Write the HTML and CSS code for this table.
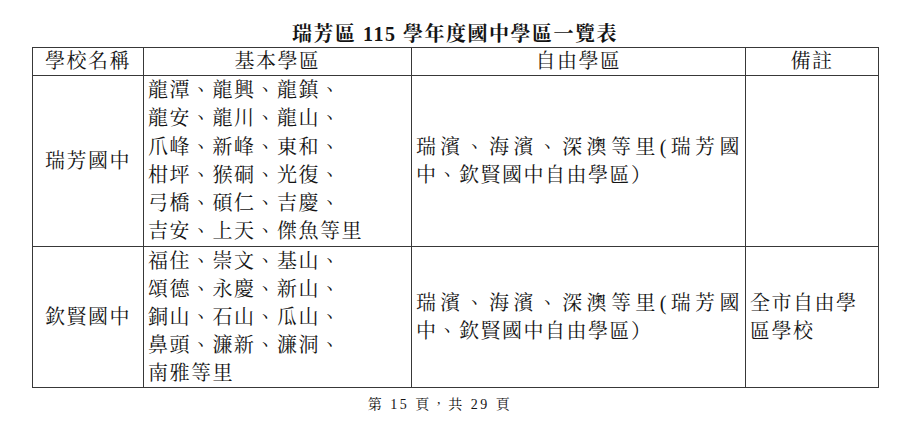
FILE: index.html
```html
<!DOCTYPE html>
<html lang="zh-Hant">
<head>
<meta charset="utf-8">
<title>瑞芳區115學年度國中學區一覽表</title>
<link rel="stylesheet" href="styles.css">
</head>
<body>
<div class="page">
  <h1 class="title">瑞芳區 115 學年度國中學區一覽表</h1>
  <table class="districts">
    <colgroup>
      <col class="c-school">
      <col class="c-basic">
      <col class="c-free">
      <col class="c-note">
    </colgroup>
    <thead>
      <tr>
        <th>學校名稱</th>
        <th>基本學區</th>
        <th>自由學區</th>
        <th>備註</th>
      </tr>
    </thead>
    <tbody>
      <tr class="row-a">
        <td class="school">瑞芳國中</td>
        <td class="basic">龍潭、龍興、龍鎮、<br>龍安、龍川、龍山、<br>爪峰、新峰、東和、<br>柑坪、猴硐、光復、<br>弓橋、碩仁、吉慶、<br>吉安、上天、傑魚等里</td>
        <td class="free"><span class="jl">瑞濱、海濱、深澳等里(瑞芳國</span>中、欽賢國中自由學區）</td>
        <td class="note"></td>
      </tr>
      <tr class="row-b">
        <td class="school">欽賢國中</td>
        <td class="basic">福住、崇文、基山、<br>頌德、永慶、新山、<br>銅山、石山、瓜山、<br>鼻頭、濂新、濂洞、<br>南雅等里</td>
        <td class="free"><span class="jl">瑞濱、海濱、深澳等里(瑞芳國</span>中、欽賢國中自由學區）</td>
        <td class="note">全市自由學<br>區學校</td>
      </tr>
    </tbody>
  </table>
  <div class="footer">第 15 頁，共 29 頁</div>
</div>
</body>
</html>
```

FILE: styles.css
```css
html, body {
  margin: 0;
  padding: 0;
  background: #ffffff;
}

body {
  font-family: "Liberation Serif", "Noto Serif CJK TC", "Noto Sans CJK TC", serif;
  color: #141414;
}

.page {
  width: 846px;
  margin-left: 32px;
}

.title {
  margin: 0;
  padding-top: 22px;
  height: 25px;
  line-height: 25px;
  font-size: 20px;
  font-weight: bold;
  text-align: center;
  letter-spacing: 1.5px;
}

.districts {
  width: 846px;
  table-layout: fixed;
  border-collapse: collapse;
  font-size: 20px;
  letter-spacing: 1.5px;
}

.c-school { width: 111px; }
.c-basic { width: 268px; }
.c-free { width: 334px; }
.c-note { width: 133px; }

.districts th,
.districts td {
  border: 1px solid #383838;
  padding: 0 4px;
  line-height: 28px;
  font-weight: normal;
}

.districts th {
  height: 27px;
  line-height: 27px;
  text-align: center;
  vertical-align: middle;
}

.districts td {
  vertical-align: middle;
}

.school {
  text-align: center;
}

.basic {
  padding-left: 3px;
  vertical-align: top;
  white-space: nowrap;
}

.row-a .basic {
  line-height: 28.3px;
}

.free {
  line-height: 28px;
}

.jl {
  display: block;
  text-align: justify;
  text-align-last: justify;
  white-space: nowrap;
}

.note {
  line-height: 28px;
}

.footer {
  margin-top: 6px;
  line-height: 22px;
  font-size: 14px;
  text-align: center;
  padding-right: 30px;
  letter-spacing: 2.5px;
}
```
